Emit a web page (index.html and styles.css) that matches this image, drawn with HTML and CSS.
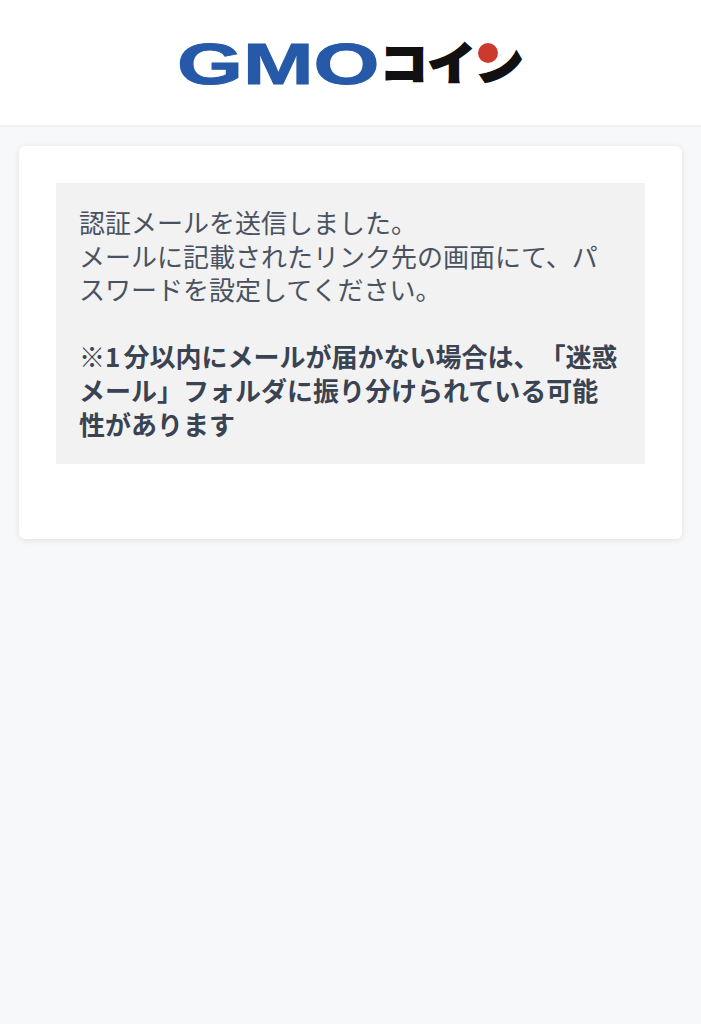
FILE: index.html
```html
<!DOCTYPE html>
<html lang="ja">
<head>
<meta charset="utf-8">
<title>GMOコイン</title>
<link rel="stylesheet" href="styles.css">
</head>
<body>
<header class="header">
  <div class="logo">
    <span class="logo-gmo">GMO</span>
    <span class="logo-coin"><span class="logo-kana">コイン</span><span class="logo-dot"></span></span>
  </div>
</header>
<main class="card">
  <div class="notice">
    <p class="notice-text">認証メールを送信しました。<br>メールに記載されたリンク先の画面にて、パスワードを設定してください。<br><br><strong class="notice-strong">※1分以内にメールが届かない場合は、「迷惑メール」フォルダに振り分けられている可能性があります</strong></p>
  </div>
</main>
</body>
</html>
```
FILE: styles.css
```css
* { box-sizing: border-box; }
html, body { margin: 0; padding: 0; }
body {
  width: 701px;
  height: 1024px;
  overflow: hidden;
  background: #f7f8fa;
  font-family: "Noto Sans CJK JP", "Liberation Sans", sans-serif;
}
.header {
  height: 127px;
  background: #fff;
  border-bottom: 2px solid #f0f1f3;
  display: flex;
  justify-content: center;
  align-items: flex-start;
  padding-top: 42px;
}
.logo {
  display: flex;
  align-items: flex-start;
  width: 342px;
  height: 44px;
}
.logo-gmo {
  display: block;
  width: 203px;
  margin-left: -3px;
  flex: none;
  font-family: "Liberation Sans", sans-serif;
  font-weight: 700;
  font-size: 58px;
  line-height: 44px;
  color: #2659a8;
  transform: scaleX(1.462);
  transform-origin: left center;
  -webkit-text-stroke: 1px #2659a8;
}
.logo-coin {
  position: relative;
  display: block;
  margin-top: -3px;
}
.logo-kana {
  display: block;
  font-weight: 900;
  font-size: 47px;
  line-height: 44px;
  color: #111;
  white-space: nowrap;
  -webkit-text-stroke: 2px #111;
  transform: scale(1.015, 0.95);
  transform-origin: left center;
}
.logo-dot {
  position: absolute;
  left: 98px;
  top: 4px;
  width: 20px;
  height: 20px;
  border-radius: 50%;
  background: #cc3a2e;
  box-shadow: 0 0 0 3px #fff;
}
.card {
  margin: 19px 19px 0;
  height: 393px;
  padding: 37px 37px 75px;
  background: #fff;
  border-radius: 6px;
  box-shadow: 0 1px 6px rgba(0, 0, 0, 0.1);
}
.notice {
  background: #f2f2f3;
  padding: 22px 23px 24px 23px;
}
.notice-text {
  margin: 0;
  font-size: 26px;
  line-height: 33.6px;
  color: #4a5261;
  text-spacing-trim: space-all;
  text-autospace: normal;
}
.notice-strong {
  font-weight: 700;
  color: #3a4352;
}
```
